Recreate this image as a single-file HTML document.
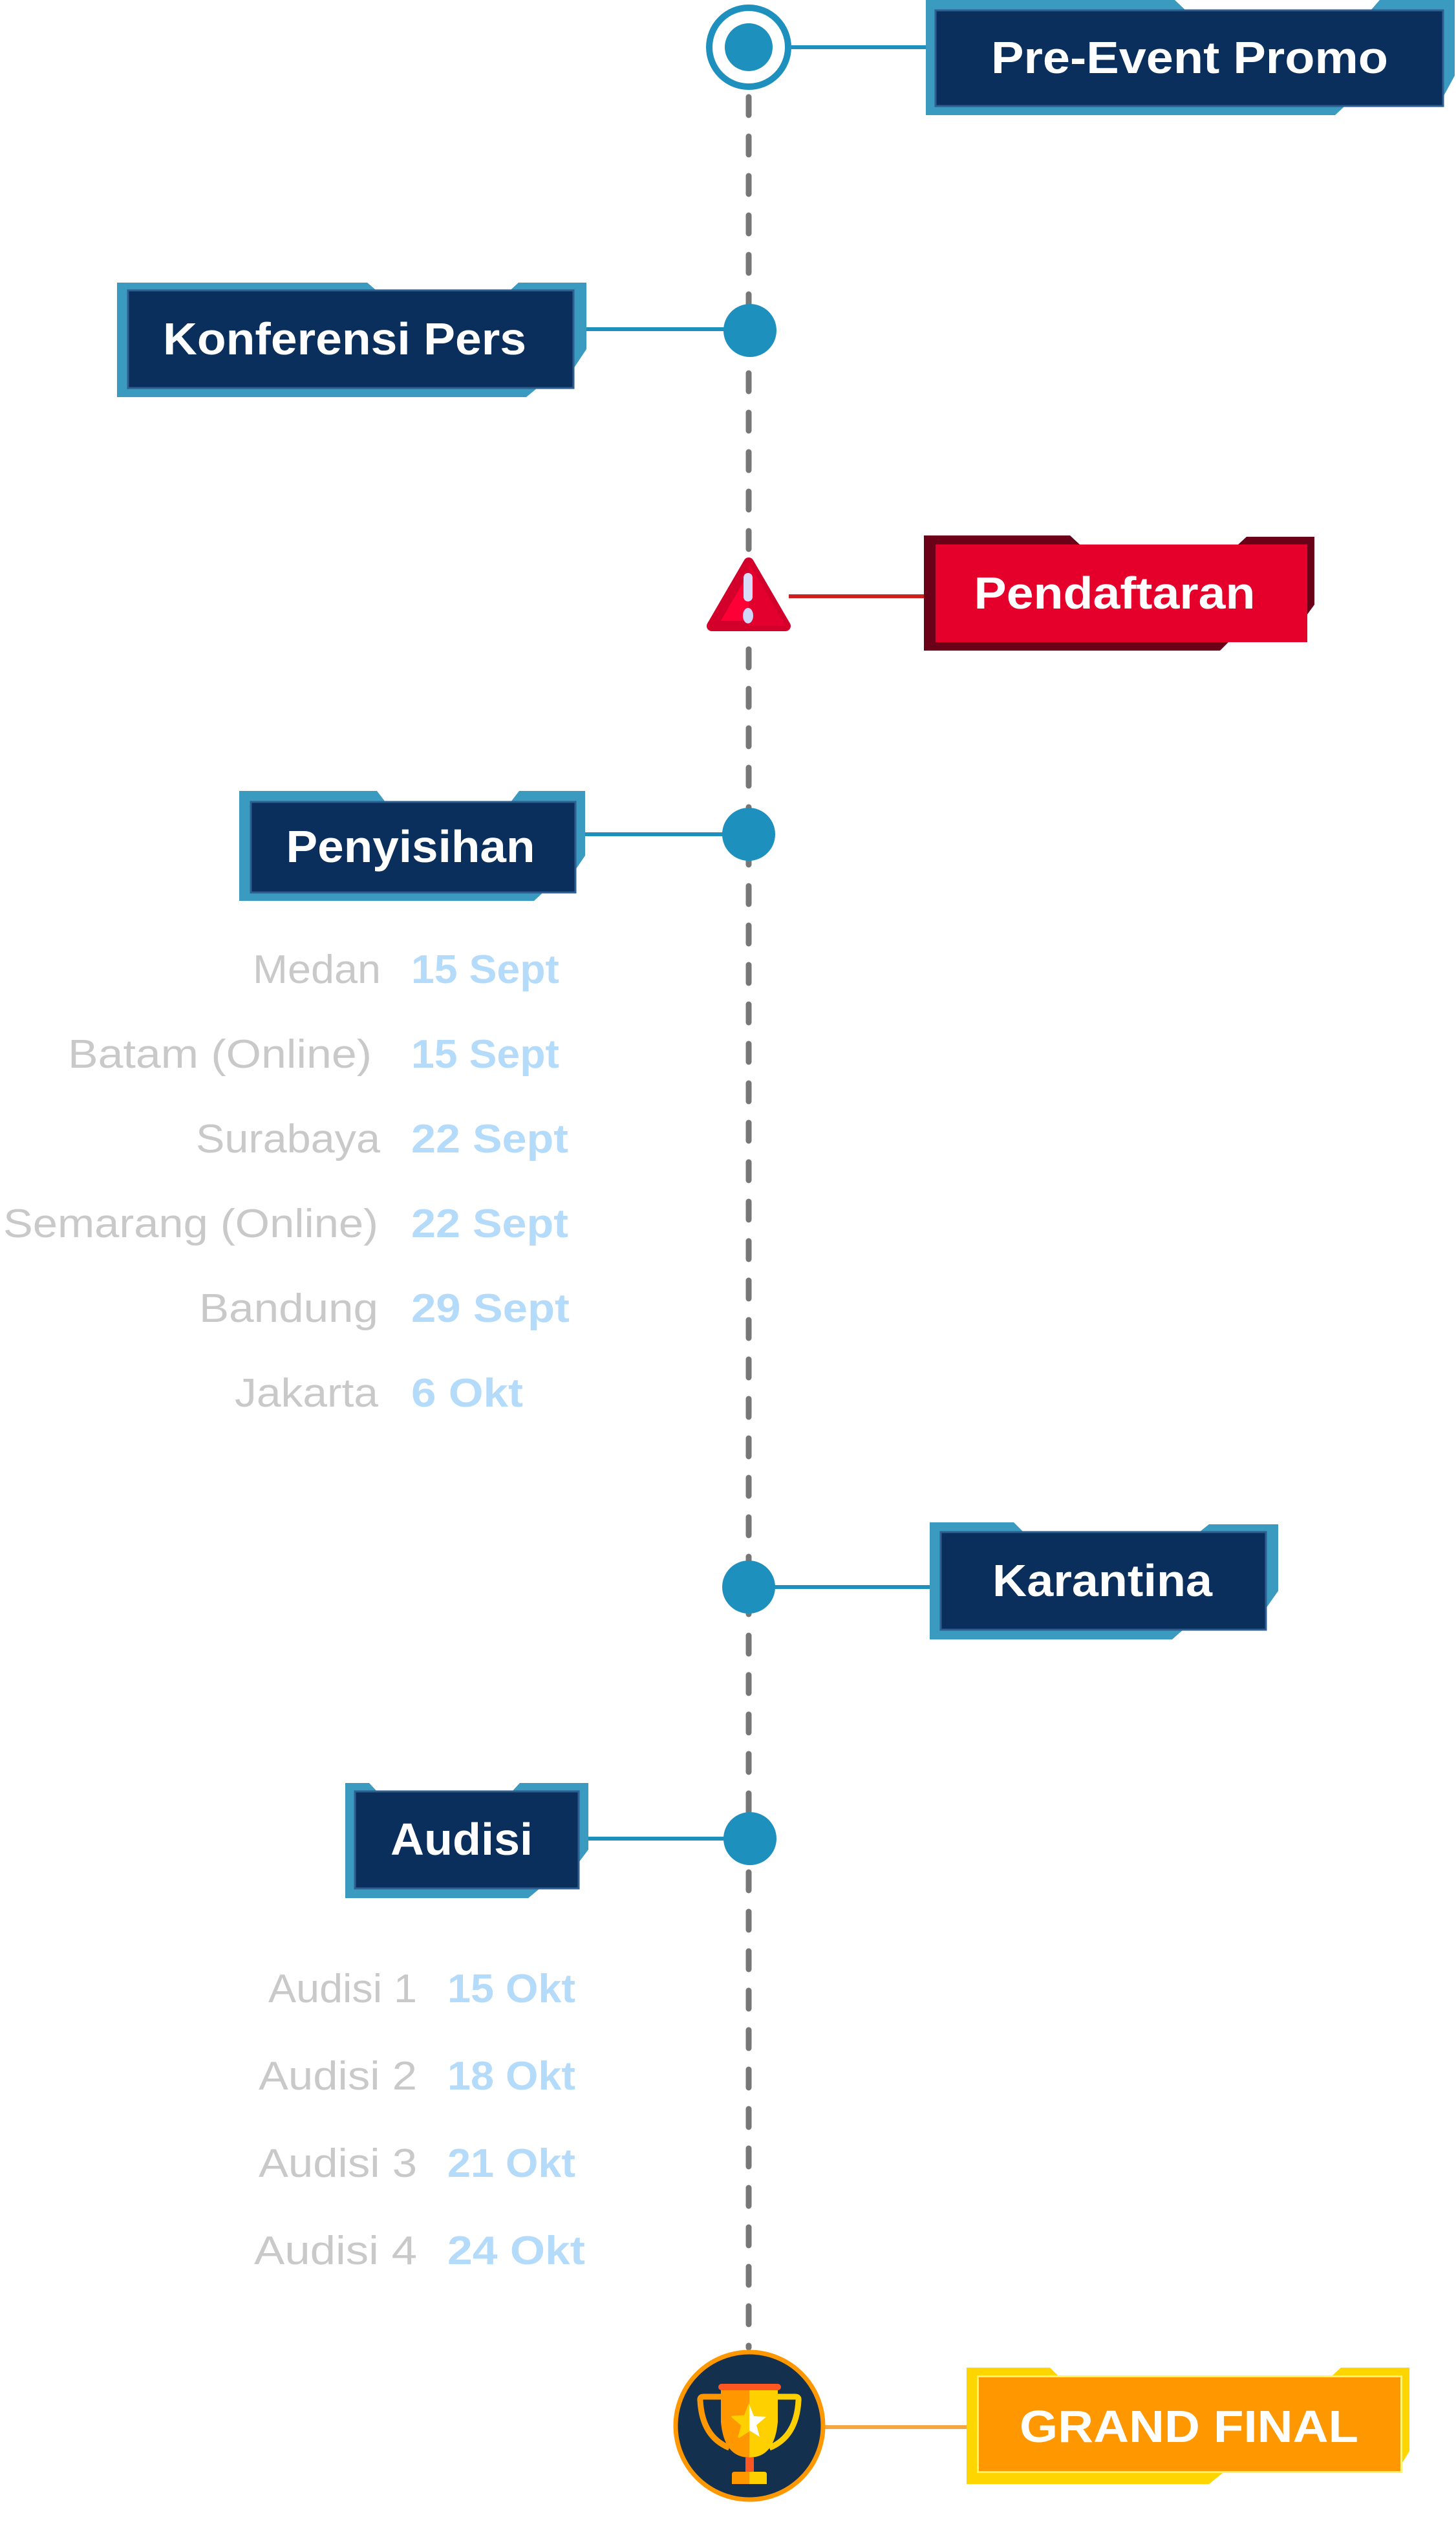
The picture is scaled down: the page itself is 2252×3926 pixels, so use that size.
<!DOCTYPE html>
<html><head><meta charset="utf-8"><style>
html,body{margin:0;padding:0;background:#fff;}
svg{display:block;}
.lbl{font-family:"Liberation Sans",sans-serif;font-weight:700;fill:#fff;font-size:70px;}
.city{font-family:"Liberation Sans",sans-serif;font-weight:400;fill:#c9c9c9;font-size:62px;}
.date{font-family:"Liberation Sans",sans-serif;font-weight:700;fill:#b5dbfb;font-size:62px;}
</style></head><body>
<svg width="2252" height="3926" viewBox="0 0 2252 3926" xmlns="http://www.w3.org/2000/svg">
<!-- dashed timeline -->
<line x1="1158" y1="150" x2="1158" y2="3630" stroke="#777" stroke-width="9" stroke-linecap="round" stroke-dasharray="28 33"/>

<!-- Pre-Event Promo -->
<circle cx="1158" cy="73" r="61" fill="#fff" stroke="#1e90be" stroke-width="10"/>
<circle cx="1158" cy="73" r="37" fill="#1e90be"/>
<rect x="1224" y="70" width="210" height="6" fill="#1e90be"/>
<polygon points="1432,0 1817,0 1834,16 2120,16 2134,0 2250,0 2250,117 2232,150 2232,164 2080,164 2065,178 1432,178" fill="#3a9abf"/>
<rect x="1447" y="16" width="785" height="148" fill="#0a2f5c" stroke="#2f5f90" stroke-width="3"/>
<text class="lbl" x="1840" y="113" text-anchor="middle" textLength="614" lengthAdjust="spacingAndGlyphs">Pre-Event Promo</text>

<!-- Konferensi Pers -->
<circle cx="1160" cy="511" r="41" fill="#1e90be"/>
<rect x="905" y="506" width="220" height="6" fill="#1e90be"/>
<polygon points="181,437 568,437 582,449 789,449 802,437 907,437 907,540 887,570 887,600 831,600 814,614 181,614" fill="#3a9abf"/>
<rect x="198" y="449" width="689" height="151" fill="#0a2f5c" stroke="#2f5f90" stroke-width="3"/>
<text class="lbl" x="533" y="548" text-anchor="middle" textLength="562" lengthAdjust="spacingAndGlyphs">Konferensi Pers</text>

<!-- Pendaftaran -->
<rect x="1220" y="919" width="212" height="6" fill="#d01f1f"/>
<polygon points="1429,828 1655,828 1670,842 1915,842 1928,830 2033,830 2033,935 2022,950 2022,993 1900,993 1887,1006 1429,1006" fill="#6b0019"/>
<rect x="1447" y="842" width="575" height="151" fill="#e4002b"/>
<text class="lbl" x="1724" y="941" text-anchor="middle" textLength="435" lengthAdjust="spacingAndGlyphs">Pendaftaran</text>
<path d="M1158,870 L1215,968 L1101,968 Z" fill="#ff0036" stroke="#d4002c" stroke-width="16" stroke-linejoin="round"/>
<path d="M1158,870 L1215,968 L1158,968 Z" fill="#e4002e"/>
<rect x="1150" y="886" width="14" height="44" rx="7" fill="#d8dcf8"/>
<ellipse cx="1157" cy="952" rx="8" ry="12" fill="#d0d6f8"/>

<!-- Penyisihan -->
<circle cx="1158" cy="1290" r="41" fill="#1e90be"/>
<rect x="903" y="1287" width="220" height="6" fill="#1e90be"/>
<polygon points="370,1223 583,1223 596,1240 790,1240 803,1223 905,1223 905,1323 890,1345 890,1380 840,1380 826,1393 370,1393" fill="#3a9abf"/>
<rect x="388" y="1240" width="502" height="140" fill="#0a2f5c" stroke="#2f5f90" stroke-width="3"/>
<text class="lbl" x="635" y="1333" text-anchor="middle" textLength="385" lengthAdjust="spacingAndGlyphs">Penyisihan</text>

<text class="city" x="589" y="1520" text-anchor="end" textLength="198" lengthAdjust="spacingAndGlyphs">Medan</text>
<text class="date" x="636" y="1520" textLength="229" lengthAdjust="spacingAndGlyphs">15 Sept</text>
<text class="city" x="575" y="1651" text-anchor="end" textLength="470" lengthAdjust="spacingAndGlyphs">Batam (Online)</text>
<text class="date" x="636" y="1651" textLength="229" lengthAdjust="spacingAndGlyphs">15 Sept</text>
<text class="city" x="588" y="1782" text-anchor="end" textLength="285" lengthAdjust="spacingAndGlyphs">Surabaya</text>
<text class="date" x="636" y="1782" textLength="243" lengthAdjust="spacingAndGlyphs">22 Sept</text>
<text class="city" x="585" y="1913" text-anchor="end" textLength="580" lengthAdjust="spacingAndGlyphs">Semarang (Online)</text>
<text class="date" x="636" y="1913" textLength="243" lengthAdjust="spacingAndGlyphs">22 Sept</text>
<text class="city" x="585" y="2044" text-anchor="end" textLength="277" lengthAdjust="spacingAndGlyphs">Bandung</text>
<text class="date" x="636" y="2044" textLength="245" lengthAdjust="spacingAndGlyphs">29 Sept</text>
<text class="city" x="585" y="2175" text-anchor="end" textLength="222" lengthAdjust="spacingAndGlyphs">Jakarta</text>
<text class="date" x="636" y="2175" textLength="173" lengthAdjust="spacingAndGlyphs">6 Okt</text>

<!-- Karantina -->
<circle cx="1158" cy="2454" r="41" fill="#1e90be"/>
<rect x="1190" y="2451" width="250" height="6" fill="#1e90be"/>
<polygon points="1438,2354 1568,2354 1583,2369 1855,2369 1870,2357 1977,2357 1977,2460 1958,2487 1958,2520 1830,2520 1813,2535 1438,2535" fill="#3a9abf"/>
<rect x="1455" y="2369" width="503" height="151" fill="#0a2f5c" stroke="#2f5f90" stroke-width="3"/>
<text class="lbl" x="1705" y="2468" text-anchor="middle" textLength="340" lengthAdjust="spacingAndGlyphs">Karantina</text>

<!-- Audisi -->
<circle cx="1160" cy="2843" r="41" fill="#1e90be"/>
<rect x="908" y="2840" width="220" height="6" fill="#1e90be"/>
<polygon points="534,2757 571,2757 583,2770 792,2770 804,2757 910,2757 910,2860 895,2880 895,2920 835,2920 817,2935 534,2935" fill="#3a9abf"/>
<rect x="549" y="2770" width="346" height="150" fill="#0a2f5c" stroke="#2f5f90" stroke-width="3"/>
<text class="lbl" x="714" y="2868" text-anchor="middle" textLength="220" lengthAdjust="spacingAndGlyphs">Audisi</text>

<text class="city" x="645" y="3096" text-anchor="end" textLength="230" lengthAdjust="spacingAndGlyphs">Audisi 1</text>
<text class="date" x="692" y="3096" textLength="198" lengthAdjust="spacingAndGlyphs">15 Okt</text>
<text class="city" x="645" y="3231" text-anchor="end" textLength="245" lengthAdjust="spacingAndGlyphs">Audisi 2</text>
<text class="date" x="692" y="3231" textLength="198" lengthAdjust="spacingAndGlyphs">18 Okt</text>
<text class="city" x="645" y="3366" text-anchor="end" textLength="245" lengthAdjust="spacingAndGlyphs">Audisi 3</text>
<text class="date" x="692" y="3366" textLength="198" lengthAdjust="spacingAndGlyphs">21 Okt</text>
<text class="city" x="645" y="3501" text-anchor="end" textLength="252" lengthAdjust="spacingAndGlyphs">Audisi 4</text>
<text class="date" x="692" y="3501" textLength="213" lengthAdjust="spacingAndGlyphs">24 Okt</text>

<!-- Grand Final -->
<rect x="1272" y="3750" width="226" height="6" fill="#f4a640"/>
<circle cx="1159" cy="3751" r="114" fill="#13304f" stroke="#ff9800" stroke-width="7"/>
<!-- trophy -->
<path d="M1115,3706 L1088,3706 Q1082,3706 1083,3712 Q1086,3768 1128,3785" fill="none" stroke="#ff9800" stroke-width="9"/>
<path d="M1203,3706 L1230,3706 Q1236,3706 1235,3712 Q1232,3768 1190,3785" fill="none" stroke="#ffd000" stroke-width="9"/>
<path d="M1115,3695 L1159,3695 L1159,3800 Q1120,3800 1115,3745 Z" fill="#ff9800"/>
<path d="M1159,3695 L1203,3695 L1203,3745 Q1198,3800 1159,3800 Z" fill="#ffd000"/>
<rect x="1111" y="3686" width="97" height="10" rx="5" fill="#ff5722"/>
<rect x="1153" y="3800" width="13" height="22" fill="#ff5722"/>
<path d="M1136,3822 L1159,3822 L1159,3841 L1132,3841 L1132,3826 Q1132,3822 1136,3822 Z" fill="#ff9800"/>
<path d="M1159,3822 L1182,3822 Q1186,3822 1186,3826 L1186,3841 L1159,3841 Z" fill="#ffd000"/>
<path d="M1159,3718 L1166,3736 L1185,3737 L1170,3750 L1175,3768 L1159,3758 L1143,3768 L1148,3750 L1133,3737 L1152,3736 Z" fill="#ffd000" stroke="#ffd000" stroke-width="3" stroke-linejoin="round"/>
<path d="M1159,3718 L1166,3736 L1185,3737 L1170,3750 L1175,3768 L1159,3758 Z" fill="#fff"/>
<polygon points="1495,3661 1624,3661 1636,3673 2061,3673 2074,3661 2180,3661 2180,3790 2169,3808 2169,3824 1891,3824 1870,3841 1495,3841" fill="#ffd500"/>
<rect x="1511" y="3673" width="658" height="151" fill="#fff36b"/>
<rect x="1514" y="3676" width="652" height="145" fill="#ff9800"/>
<text class="lbl" x="1839" y="3776" text-anchor="middle" textLength="524" lengthAdjust="spacingAndGlyphs">GRAND FINAL</text>
</svg>
</body></html>
